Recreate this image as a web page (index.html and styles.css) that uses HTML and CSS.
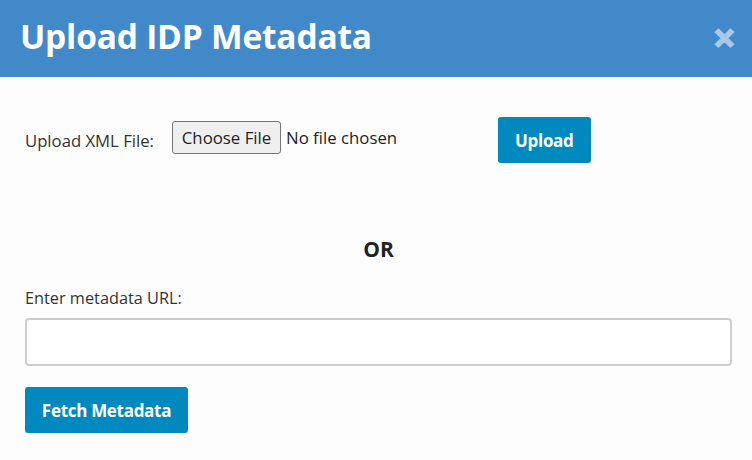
FILE: index.html
```html
<!DOCTYPE html>
<html lang="en">
<head>
<meta charset="utf-8">
<title>Upload IDP Metadata</title>
<link rel="stylesheet" href="styles.css">
</head>
<body>
<div class="modal">
  <header class="modal-header">
    <h1 class="modal-title">Upload IDP Metadata</h1>
    <span class="close">&#x2715;</span>
  </header>
  <div class="modal-body">
    <div class="upload-row">
      <span class="field-label">Upload XML File:</span>
      <span class="file-widget">
        <span class="file-btn">Choose File</span>
        <span class="file-status">No file chosen</span>
      </span>
      <button class="btn">Upload</button>
    </div>
    <div class="or">OR</div>
    <label class="url-label">Enter metadata URL:</label>
    <input class="url-input" type="text">
    <div class="fetch-row">
      <button class="btn btn-fetch">Fetch Metadata</button>
    </div>
  </div>
</div>
</body>
</html>
```
FILE: styles.css
```css
html, body {
  margin: 0;
  padding: 0;
  background: #fdfdfd;
  font-family: "Open Sans", "Noto Sans", sans-serif;
  color: #2b2b2b;
}
.modal {
  width: 752px;
  height: 460px;
  overflow: hidden;
}
.modal-header {
  height: 77px;
  background: #4289c9;
  display: flex;
  align-items: center;
  justify-content: space-between;
  padding: 0 16px 0 20px;
  box-sizing: border-box;
}
.modal-title {
  margin: 0;
  color: #ffffff;
  font-size: 33.5px;
  font-weight: 700;
  letter-spacing: -0.2px;
  line-height: 1;
  padding-bottom: 3px;
}
.close {
  color: #a8c9e8;
  font-size: 27px;
  font-weight: 700;
  line-height: 1;
  padding-bottom: 2px;
  -webkit-text-stroke: 2px #a8c9e8;
}
.modal-body {
  padding: 40px 20px 0 25px;
}
.upload-row {
  display: flex;
  align-items: center;
  height: 46px;
}
.field-label {
  width: 147px;
  font-size: 16.7px;
  color: #333;
}
.file-widget {
  width: 326px;
  display: flex;
  align-items: center;
  font-size: 16.8px;
  color: #222;
  padding-bottom: 5px;
}
.file-btn {
  box-sizing: border-box;
  height: 33px;
  width: 109px;
  display: inline-flex;
  align-items: center;
  justify-content: center;
  background: #efefef;
  border: 1px solid #767676;
  border-radius: 3px;
  margin-right: 5px;
  font-size: 16.8px;
  color: #222;
}
.btn {
  box-sizing: border-box;
  height: 46px;
  padding: 0 17px;
  background: #0089bf;
  color: #fff;
  border: none;
  border-radius: 3px;
  font-family: "Open Sans", "Noto Sans", sans-serif;
  font-size: 17px;
  font-weight: 700;
  letter-spacing: -0.3px;
}
.or {
  text-align: center;
  font-size: 21px;
  font-weight: 700;
  color: #222;
  margin-top: 73px;
  line-height: 26px;
}
.url-label {
  display: block;
  font-size: 16.3px;
  color: #333;
  margin-top: 25px;
  line-height: 22px;
}
.url-input {
  display: block;
  box-sizing: border-box;
  width: 707px;
  height: 48px;
  margin-top: 9px;
  border: 2px solid #cfcccf;
  border-radius: 4px;
  background: #fff;
  font-size: 15px;
}
.fetch-row {
  margin-top: 21px;
}
.btn-fetch {
  width: 163px;
  padding: 0;
}
```
